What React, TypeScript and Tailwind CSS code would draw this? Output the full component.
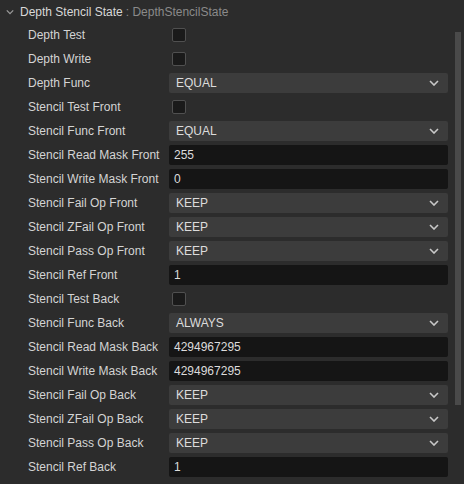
import React from "react";

type Row =
  | { label: string; type: "check" }
  | { label: string; type: "select"; value: string }
  | { label: string; type: "input"; value: string };

const rows: Row[] = [
  { label: "Depth Test", type: "check" },
  { label: "Depth Write", type: "check" },
  { label: "Depth Func", type: "select", value: "EQUAL" },
  { label: "Stencil Test Front", type: "check" },
  { label: "Stencil Func Front", type: "select", value: "EQUAL" },
  { label: "Stencil Read Mask Front", type: "input", value: "255" },
  { label: "Stencil Write Mask Front", type: "input", value: "0" },
  { label: "Stencil Fail Op Front", type: "select", value: "KEEP" },
  { label: "Stencil ZFail Op Front", type: "select", value: "KEEP" },
  { label: "Stencil Pass Op Front", type: "select", value: "KEEP" },
  { label: "Stencil Ref Front", type: "input", value: "1" },
  { label: "Stencil Test Back", type: "check" },
  { label: "Stencil Func Back", type: "select", value: "ALWAYS" },
  { label: "Stencil Read Mask Back", type: "input", value: "4294967295" },
  { label: "Stencil Write Mask Back", type: "input", value: "4294967295" },
  { label: "Stencil Fail Op Back", type: "select", value: "KEEP" },
  { label: "Stencil ZFail Op Back", type: "select", value: "KEEP" },
  { label: "Stencil Pass Op Back", type: "select", value: "KEEP" },
  { label: "Stencil Ref Back", type: "input", value: "1" },
];

function Chevron({ className }: { className?: string }) {
  return (
    <svg width="10" height="6" viewBox="0 0 10 6" className={className}>
      <path d="M1 1 L5 5 L9 1" fill="none" stroke="currentColor" strokeWidth="1.6" />
    </svg>
  );
}

export default function App() {
  return (
    <div
      className="relative w-[464px] h-[484px] bg-[#2c2c2c] text-[12px] text-[#d4d4d4] overflow-hidden"
      style={{ fontFamily: '"Liberation Sans", Arial, sans-serif' }}
    >
      <div className="flex items-center h-[23px] pl-[6px]">
        <Chevron className="text-[#9a9a9a] mr-[6px] w-[8px]" />
        <span className="text-[#d8d8d8]">Depth Stencil State</span>
        <span className="text-[#8a8a8a] ml-[3px]">: DepthStencilState</span>
      </div>
      <div className="flex flex-col">
        {rows.map((r) => (
          <div key={r.label} className="flex items-center h-[24px]">
            <div className="w-[169px] pl-[28px] text-[#d4d4d4] whitespace-nowrap">{r.label}</div>
            <div className="w-[279px] flex items-center">
              {r.type === "check" && (
                <div className="ml-[3px] w-[14px] h-[14px] rounded-[2px] border border-[#505050] bg-[#1a1a1a]" />
              )}
              {r.type === "select" && (
                <div className="w-full h-[20px] rounded-[2px] bg-[#3c3c3c] flex items-center justify-between pl-[7px] pr-[9px]">
                  <span className="text-[#dcdcdc]">{r.value}</span>
                  <Chevron className="text-[#c8c8c8]" />
                </div>
              )}
              {r.type === "input" && (
                <div className="w-full h-[20px] rounded-[2px] bg-[#151515] flex items-center pl-[5px]">
                  <span className="text-[#dcdcdc]">{r.value}</span>
                </div>
              )}
            </div>
          </div>
        ))}
      </div>
      <div className="absolute left-[455px] top-[32px] w-[6px] h-[373px] bg-[#4a4a4a]" />
    </div>
  );
}
